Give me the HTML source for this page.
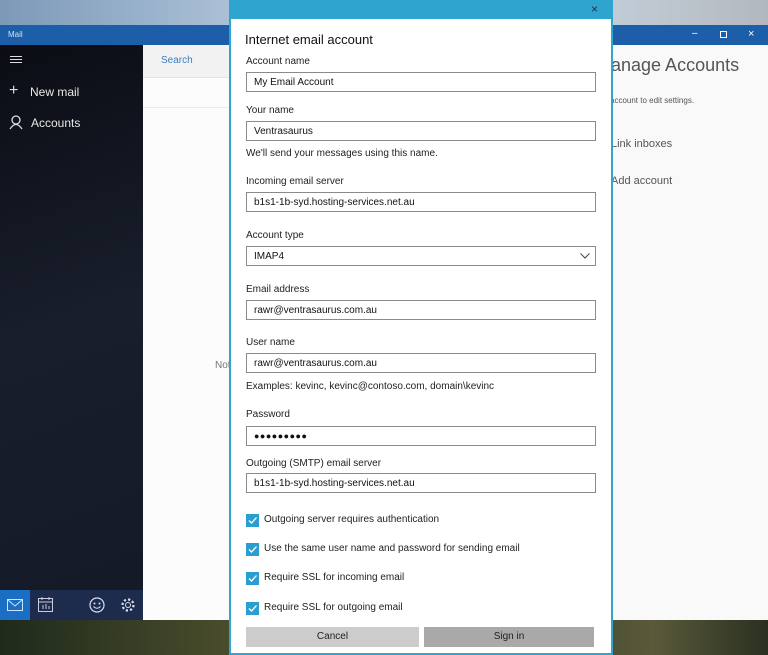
<!DOCTYPE html>
<html><head><style>
*{margin:0;padding:0;box-sizing:border-box}
body{width:768px;height:655px;position:relative;overflow:hidden;font-family:"Liberation Sans",sans-serif;background:#2b3a2a}
.abs{position:absolute}
.lbl{position:absolute;left:246px;font-size:10px;color:#222}
.inp{position:absolute;left:246px;width:350px;height:20px;border:1.5px solid #8a8a8a;background:#fff;font-size:10px;color:#111;padding:4px 0 0 7px}
.cb{position:absolute;left:246px;width:13px;height:13px;background:#2a9ed0}
.cb svg{position:absolute;left:1px;top:1px}
.ct{position:absolute;left:264px;font-size:10px;color:#222}
</style></head><body>
<div class="abs" style="left:0;top:0;width:768px;height:25px;background:linear-gradient(90deg,#7d99b8,#b9cde0 40%,#c9d6e2 70%,#b3b8bf)"></div>
<div class="abs" style="left:0;top:620px;width:768px;height:35px;background:linear-gradient(90deg,#1f2a1c,#4a4d2c 30%,#2c3423 60%,#5a5a3a 85%,#2a3020)"></div>
<div class="abs" style="left:0;top:25px;width:768px;height:20px;background:#1c5ea8"></div>
<div class="abs" style="left:8px;top:30px;font-size:8px;color:#cfe0f5">Mail</div>
<div class="abs" style="left:692px;top:28px;font-size:10px;color:#fff">–</div>
<div class="abs" style="left:720px;top:31px;width:7px;height:7px;border:1px solid #fff"></div>
<div class="abs" style="left:748px;top:28px;font-size:11px;color:#fff">×</div>
<div class="abs" style="left:0;top:45px;width:143px;height:545px;background:linear-gradient(160deg,#0b0d14,#181e2b 50%,#141a26)"></div>
<div class="abs" style="left:10px;top:56px;width:12px;height:1px;background:#ddd;box-shadow:0 3px #ddd,0 6px #ddd"></div>
<div class="abs" style="left:9px;top:82px;font-size:16px;color:#ddd;font-weight:300">+</div>
<div class="abs" style="left:30px;top:85px;font-size:12px;color:#e8e8e8">New mail</div>
<svg class="abs" style="left:9px;top:115px" width="14" height="15"><circle cx="7" cy="5" r="4" fill="none" stroke="#ddd" stroke-width="1.3"/><path d="M1 14 Q7 5 13 14" fill="none" stroke="#ddd" stroke-width="1.3"/></svg>
<div class="abs" style="left:31px;top:116px;font-size:12px;color:#e8e8e8">Accounts</div>
<div class="abs" style="left:0;top:590px;width:143px;height:30px;background:#1d2c4d"></div>
<div class="abs" style="left:0;top:590px;width:30px;height:30px;background:#1a6fc4"></div>
<svg class="abs" style="left:7px;top:599px" width="16" height="12"><rect x="0.5" y="0.5" width="15" height="11" fill="none" stroke="#cfe4fa"/><path d="M1 1 L8 7 L15 1" fill="none" stroke="#cfe4fa"/></svg>
<svg class="abs" style="left:38px;top:597px" width="15" height="15"><rect x="0.5" y="1.5" width="14" height="13" fill="none" stroke="#ccd"/><path d="M0 5h15M4 0v3M11 0v3M5 8v4M8 7v5M11 9v3" stroke="#ccd"/></svg>
<svg class="abs" style="left:89px;top:597px" width="16" height="16"><circle cx="8" cy="8" r="7" fill="none" stroke="#dde" stroke-width="1.2"/><circle cx="5.5" cy="6.5" r="1" fill="#dde"/><circle cx="10.5" cy="6.5" r="1" fill="#dde"/><path d="M4.5 9.5 Q8 13 11.5 9.5" fill="none" stroke="#dde"/></svg>
<svg class="abs" style="left:120px;top:597px" width="16" height="16"><circle cx="8" cy="8" r="2.5" fill="none" stroke="#dde"/><circle cx="8" cy="8" r="5.5" fill="none" stroke="#dde" stroke-width="2.2" stroke-dasharray="2.2 2.1"/></svg>
<div class="abs" style="left:143px;top:45px;width:87px;height:575px;background:#fcfcfc"></div>
<div class="abs" style="left:143px;top:45px;width:87px;height:33px;background:#f2f2f2;border-bottom:1px solid #e4e4e4"></div>
<div class="abs" style="left:161px;top:55px;font-size:10px;color:#3b7fbf">Search</div>
<div class="abs" style="left:143px;top:107px;width:87px;height:1px;background:#ececec"></div>
<div class="abs" style="left:215px;top:360px;font-size:10px;color:#777">Not</div>
<div class="abs" style="left:612px;top:45px;width:156px;height:575px;background:#f9f9f9"></div>
<div class="abs" style="left:611px;top:55px;font-size:18px;color:#555;font-weight:300">anage Accounts</div>
<div class="abs" style="left:610px;top:96px;font-size:8px;color:#555">account to edit settings.</div>
<div class="abs" style="left:611px;top:138px;font-size:11px;color:#555">Link inboxes</div>
<div class="abs" style="left:611px;top:175px;font-size:11px;color:#555">Add account</div>
<div class="abs" style="left:229px;top:0;width:384px;height:655px;background:#2ea5cf"></div>
<div class="abs" style="left:231px;top:19px;width:380px;height:634px;background:#fff"></div>
<div class="abs" style="left:591px;top:2px;font-size:12px;color:#234">×</div>
<div class="abs" style="left:245px;top:32px;font-size:13px;color:#111">Internet email account</div>
<div class="lbl" style="top:56px">Account name</div>
<div class="inp" style="top:72px">My Email Account</div>
<div class="lbl" style="top:105px">Your name</div>
<div class="inp" style="top:121px">Ventrasaurus</div>
<div class="lbl" style="top:148px">We'll send your messages using this name.</div>
<div class="lbl" style="top:176px">Incoming email server</div>
<div class="inp" style="top:192px">b1s1-1b-syd.hosting-services.net.au</div>
<div class="lbl" style="top:230px">Account type</div>
<div class="inp" style="top:246px">IMAP4</div>
<svg class="abs" style="left:580px;top:253px" width="10" height="6"><path d="M0.5 0.5 L5 5 L9.5 0.5" fill="none" stroke="#444"/></svg>
<div class="lbl" style="top:284px">Email address</div>
<div class="inp" style="top:300px">rawr@ventrasaurus.com.au</div>
<div class="lbl" style="top:337px">User name</div>
<div class="inp" style="top:353px">rawr@ventrasaurus.com.au</div>
<div class="lbl" style="top:381px">Examples: kevinc, kevinc@contoso.com, domain\kevinc</div>
<div class="lbl" style="top:409px">Password</div>
<div class="inp" style="top:426px;font-size:9px;letter-spacing:0.5px;padding-top:4px">●●●●●●●●●</div>
<div class="lbl" style="top:458px">Outgoing (SMTP) email server</div>
<div class="inp" style="top:473px">b1s1-1b-syd.hosting-services.net.au</div>
<div class="cb" style="top:514px"><svg width="11" height="11"><path d="M2 5.5 L4.5 8 L9.5 2.5" fill="none" stroke="#fff" stroke-width="1.3"/></svg></div>
<div class="ct" style="top:514px">Outgoing server requires authentication</div>
<div class="cb" style="top:543px"><svg width="11" height="11"><path d="M2 5.5 L4.5 8 L9.5 2.5" fill="none" stroke="#fff" stroke-width="1.3"/></svg></div>
<div class="ct" style="top:543px">Use the same user name and password for sending email</div>
<div class="cb" style="top:572px"><svg width="11" height="11"><path d="M2 5.5 L4.5 8 L9.5 2.5" fill="none" stroke="#fff" stroke-width="1.3"/></svg></div>
<div class="ct" style="top:572px">Require SSL for incoming email</div>
<div class="cb" style="top:602px"><svg width="11" height="11"><path d="M2 5.5 L4.5 8 L9.5 2.5" fill="none" stroke="#fff" stroke-width="1.3"/></svg></div>
<div class="ct" style="top:602px">Require SSL for outgoing email</div>
<div class="abs" style="left:246px;top:627px;width:173px;height:20px;background:#cccccc;font-size:10px;color:#222;text-align:center;line-height:20px">Cancel</div>
<div class="abs" style="left:424px;top:627px;width:170px;height:20px;background:#a9a9a9;font-size:10px;color:#222;text-align:center;line-height:20px">Sign in</div>
</body></html>
